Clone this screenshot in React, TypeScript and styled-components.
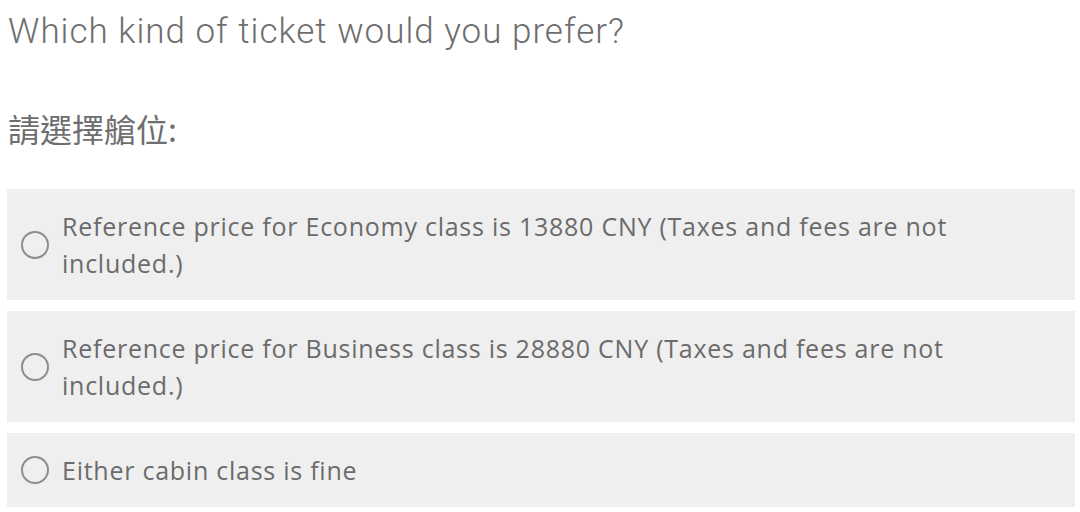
import React from 'react';
import styled, { createGlobalStyle } from 'styled-components';

const GlobalStyle = createGlobalStyle`
  body {
    margin: 0;
    background: #ffffff;
  }
`;

const Page = styled.div`
  padding: 0 5px 0 7px;
  width: 1080px;
  box-sizing: border-box;
`;

const Question = styled.h1`
  margin: 0;
  padding: 9px 0 0 1px;
  font-family: Roboto, 'Liberation Sans', sans-serif;
  font-weight: 300;
  font-size: 35px;
  line-height: 46px;
  letter-spacing: 1px;
  color: #6e6e6e;
`;

const SubTitle = styled.h2`
  margin: 51px 0 0 1px;
  font-family: 'Noto Sans CJK TC', 'Noto Sans', sans-serif;
  font-weight: 400;
  font-size: 32px;
  line-height: 44px;
  color: #6e6e6e;
`;

const OptionList = styled.div`
  margin-top: 39px;
  display: flex;
  flex-direction: column;
  gap: 11px;
`;

const Option = styled.label`
  display: flex;
  align-items: center;
  gap: 13px;
  padding: 18.5px 14px;
  background: #efefef;
  cursor: pointer;
`;

const Radio = styled.span`
  flex: none;
  width: 28px;
  height: 28px;
  border: 2px solid #8d8d8d;
  border-radius: 50%;
  box-sizing: border-box;
`;

const OptionText = styled.span`
  max-width: 960px;
  font-family: 'Open Sans', sans-serif;
  font-size: 25px;
  line-height: 37px;
  letter-spacing: 0.75px;
  color: #6b6b6b;
`;

const options = [
  'Reference price for Economy class is 13880 CNY (Taxes and fees are not included.)',
  'Reference price for Business class is 28880 CNY (Taxes and fees are not included.)',
  'Either cabin class is fine',
];

export default function App() {
  return (
    <Page>
      <GlobalStyle />
      <Question>Which kind of ticket would you prefer?</Question>
      <SubTitle>請選擇艙位:</SubTitle>
      <OptionList>
        {options.map((text) => (
          <Option key={text}>
            <Radio />
            <OptionText>{text}</OptionText>
          </Option>
        ))}
      </OptionList>
    </Page>
  );
}
